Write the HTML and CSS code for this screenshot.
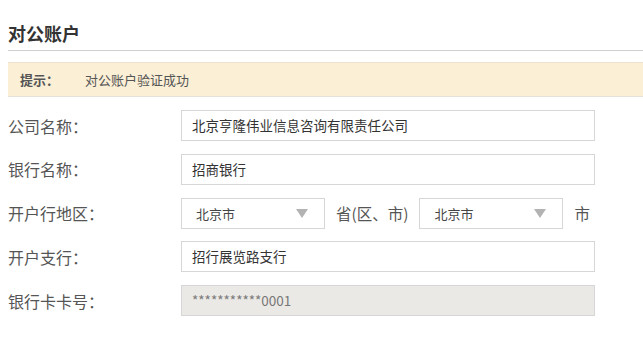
FILE: index.html
```html
<!DOCTYPE html>
<html>
<head>
    <link rel="stylesheet" href="styles.css">
</head>
<body>
  <div class="account">
    <h2 class="title">对公账户</h2>

    <div class="tip">
      <span class="tip-label">提示：</span>
      <span class="tip-text">对公账户验证成功</span>
    </div>

    <div class="form">
      <div class="row">
        <label class="label">公司名称：</label>
        <div class="field">北京亨隆伟业信息咨询有限责任公司</div>
      </div>
      <div class="row">
        <label class="label">银行名称：</label>
        <div class="field">招商银行</div>
      </div>
      <div class="row">
        <label class="label">开户行地区：</label>
        <div class="select">
          <span>北京市</span>
          <span class="arrow"></span>
        </div>
        <span class="unit">省(区、市)</span>
        <div class="select">
          <span>北京市</span>
          <span class="arrow"></span>
        </div>
        <span class="unit">市</span>
      </div>
      <div class="row">
        <label class="label">开户支行：</label>
        <div class="field">招行展览路支行</div>
      </div>
      <div class="row">
        <label class="label">银行卡卡号：</label>
        <div class="field disabled">***********0001</div>
      </div>
    </div>
  </div>
</body>
</html>
```

FILE: styles.css
```css
body {
    margin: 0;
    background: #fff;
    font-family: "Microsoft YaHei", "Noto Sans CJK SC", sans-serif;
    color: #333;
}

.account {
    padding: 0 0 0 8px;
}

.title {
    margin: 0;
    padding-top: 21px;
    height: 29px;
    font-size: 18px;
    line-height: 24px;
    font-weight: bold;
    color: #333;
    border-bottom: 1px solid #cfcfcf;
}

.tip {
    margin-top: 11px;
    height: 33px;
    display: flex;
    align-items: center;
    background: #fbefd6;
    border-top: 1px solid #ebe2cf;
    border-bottom: 1px solid #e6e2da;
    font-size: 13px;
}

.tip-label {
    width: 65px;
    padding-left: 12px;
    font-weight: bold;
    color: #555;
}

.tip-text {
    color: #555;
}

.form {
    padding-top: 13px;
}

.row {
    display: flex;
    align-items: center;
    height: 31px;
    margin-bottom: 12.75px;
}

.label {
    width: 173px;
    font-size: 16px;
    color: #555;
}

.field {
    box-sizing: border-box;
    width: 414px;
    height: 31px;
    padding: 0 10px;
    border: 1px solid #d6d6d6;
    font-size: 13.5px;
    line-height: 29px;
    color: #333;
}

.field.disabled {
    background: #ebe9e5;
    color: #777;
}

.select {
    box-sizing: border-box;
    width: 144px;
    height: 31px;
    padding: 0 16px 0 14px;
    border: 1px solid #d6d6d6;
    display: flex;
    align-items: center;
    justify-content: space-between;
    font-size: 13px;
    color: #444;
}

.arrow {
    width: 0;
    height: 0;
    border-left: 6px solid transparent;
    border-right: 6px solid transparent;
    border-top: 9px solid #b3b3b3;
}

.unit {
    padding: 0 11px;
    font-size: 15.5px;
    color: #555;
}
```
